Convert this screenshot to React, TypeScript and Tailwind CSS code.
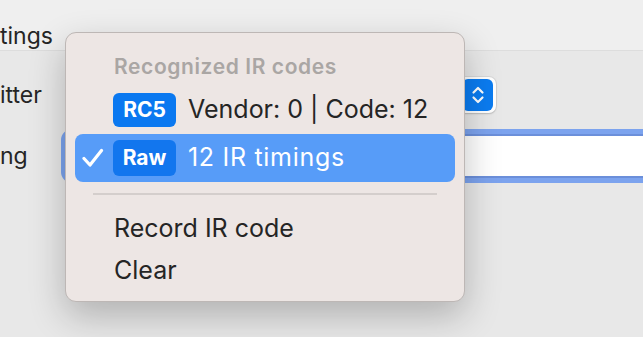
import React from 'react';

const Check: React.FC = () => (
  <svg width="22" height="20" viewBox="0 0 22 20" fill="none" className="absolute left-[7px] top-[14px]">
    <path d="M2 10.5 L8 17 L19.5 2.5" stroke="white" strokeWidth="3.2" strokeLinecap="round" strokeLinejoin="round" />
  </svg>
);

const Stepper: React.FC = () => (
  <div className="w-[31px] h-[32px] rounded-[6px] bg-[#0b7cf1] flex items-center justify-center">
    <svg width="14" height="20" viewBox="0 0 14 20" fill="none">
      <path d="M2.5 7.5 L7 3 L11.5 7.5" stroke="white" strokeWidth="2.2" strokeLinecap="round" strokeLinejoin="round" />
      <path d="M2.5 12.5 L7 17 L11.5 12.5" stroke="white" strokeWidth="2.2" strokeLinecap="round" strokeLinejoin="round" />
    </svg>
  </div>
);

const App: React.FC = () => {
  return (
    <div
      className="relative w-[643px] h-[337px] overflow-hidden bg-[#e8e8e8] text-[#252525]"
      style={{ fontFamily: 'Inter, "Noto Sans", sans-serif' }}
    >
      {/* Window header strip */}
      <div className="h-[51px] bg-[#efefef] border-b border-[#dddddd]">
        <div className="pt-[22px] text-[23px] leading-[28px]">tings</div>
      </div>

      {/* Form rows */}
      <div className="flex items-center h-[40px] mt-[24px]">
        <div className="w-[68px] text-[23px]">itter</div>
        <div className="w-[428px] h-[36px] bg-white rounded-[7px] shadow-[0_0_0_1px_rgba(0,0,0,0.06),0_1px_2px_rgba(0,0,0,0.15)] flex items-center justify-end pr-[3px]">
          <Stepper />
        </div>
      </div>
      <div className="flex items-center h-[54px] mt-[14px]">
        <div className="w-[61px] shrink-0 text-[23px]">ng</div>
        <div className="w-[620px] shrink-0 h-[54px] rounded-l-[11px] border-[5px] border-[#7ca3ee] shadow-[inset_0_0_0_2px_#6b8fda] bg-white" />
      </div>

      {/* Popup menu */}
      <div className="absolute left-[65px] top-[32px] w-[400px] h-[270px] rounded-[11px] bg-[#ede6e4] border border-[#bdb7b5] shadow-[0_14px_36px_rgba(0,0,0,0.24)] pt-[15px] px-[9px]">
        <div className="h-[38px] flex items-center pl-[39px] text-[21px] tracking-[0.6px] font-semibold text-[#aaa6a4]">
          Recognized IR codes
        </div>
        <div className="h-[48px] flex items-center pl-[38px] gap-[12px]">
          <span className="w-[63px] h-[34px] rounded-[6px] bg-[#0a78f0] text-white font-bold text-[21px] flex items-center justify-center">
            RC5
          </span>
          <span className="text-[25px]">Vendor: 0 | Code: 12</span>
        </div>
        <div className="relative h-[48px] flex items-center pl-[38px] gap-[12px] rounded-[8px] bg-[#579cf8] text-white">
          <Check />
          <span className="w-[63px] h-[36px] rounded-[6px] bg-[#1276ee] font-bold text-[21px] flex items-center justify-center">
            Raw
          </span>
          <span className="text-[25px] tracking-[0.7px]">12 IR timings</span>
        </div>
        <div className="pt-[11px] pb-[13px] px-[18px]">
          <div className="h-[1.5px] bg-[#d4cecc]" />
        </div>
        <div className="h-[42px] flex items-center pl-[39px] text-[25px]">Record IR code</div>
        <div className="h-[42px] flex items-center pl-[39px] text-[25px]">Clear</div>
      </div>
    </div>
  );
};

export default App;
